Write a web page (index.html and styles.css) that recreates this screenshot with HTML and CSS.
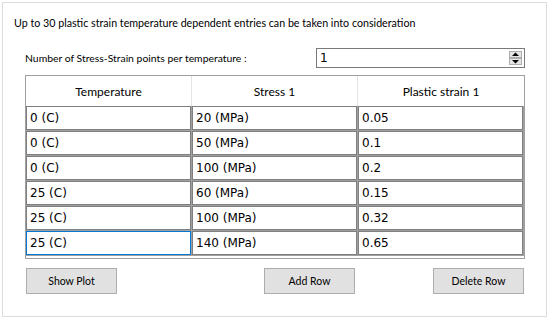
FILE: index.html
```html
<!DOCTYPE html>
<html lang="en">
<head>
  <meta charset="UTF-8">
  <title>Plastic strain</title>
  <link rel="stylesheet" href="styles.css">
</head>
<body>

<div class="frame">
  <p class="note">Up to 30 plastic strain temperature dependent entries can be taken into consideration</p>

  <div class="points">
    <span class="points-label">Number of Stress-Strain points per temperature :</span>
    <div class="spin">
      <span class="spin-value">1</span>
      <svg class="spin-btns" width="13" height="14" viewBox="0 0 13 14">
        <rect x="0.5" y="0.5" width="12" height="6" fill="#e5e5e5" stroke="#adadad"/>
        <rect x="0.5" y="7.5" width="12" height="6" fill="#e5e5e5" stroke="#adadad"/>
        <polygon points="3,5 10,5 6.5,1.5" fill="#000"/>
        <polygon points="3,9 10,9 6.5,12.5" fill="#000"/>
      </svg>
    </div>
  </div>

  <div class="grid">
    <div class="head">Temperature</div>
    <div class="head">Stress 1</div>
    <div class="head last">Plastic strain 1</div>

    <div class="cell"><div class="edit">0 (C)</div></div>
    <div class="cell"><div class="edit">20 (MPa)</div></div>
    <div class="cell"><div class="edit">0.05</div></div>

    <div class="cell"><div class="edit">0 (C)</div></div>
    <div class="cell"><div class="edit">50 (MPa)</div></div>
    <div class="cell"><div class="edit">0.1</div></div>

    <div class="cell"><div class="edit">0 (C)</div></div>
    <div class="cell"><div class="edit">100 (MPa)</div></div>
    <div class="cell"><div class="edit">0.2</div></div>

    <div class="cell"><div class="edit">25 (C)</div></div>
    <div class="cell"><div class="edit">60 (MPa)</div></div>
    <div class="cell"><div class="edit">0.15</div></div>

    <div class="cell"><div class="edit">25 (C)</div></div>
    <div class="cell"><div class="edit">100 (MPa)</div></div>
    <div class="cell"><div class="edit">0.32</div></div>

    <div class="cell"><div class="edit selected">25 (C)</div></div>
    <div class="cell"><div class="edit">140 (MPa)</div></div>
    <div class="cell"><div class="edit">0.65</div></div>
  </div>

  <div class="buttons">
    <button class="btn">Show Plot</button>
    <button class="btn add">Add Row</button>
    <button class="btn delete">Delete Row</button>
  </div>
</div>

</body>
</html>
```

FILE: styles.css
```css
body {
  margin: 0;
  background: #fff;
  font-family: Lato, "Noto Sans", sans-serif;
  font-size: 10.7px;
  color: #000;
}
.frame {
  margin: 2px 3px 0 2px;
  height: 313px;
  border: 1px solid #dcdcdc;
  padding: 0 21px 0 22px;
}
.note {
  margin: 12px 0 0 -11px;
  line-height: 16px;
}
.points {
  display: flex;
  justify-content: space-between;
  align-items: center;
  margin-top: 17px;
}
.points-label {
  font-size: 10.4px;
}
.spin {
  width: 207px;
  height: 18px;
  border: 1px solid #7a7a7a;
  display: flex;
  align-items: center;
  justify-content: space-between;
}
.spin-value {
  font-family: "DejaVu Sans", sans-serif;
  font-size: 12px;
  padding-left: 3px;
}
.spin-btns {
  margin-right: 2px;
}
.grid {
  margin-top: 7px;
  border: 1px solid #a0a0a0;
  padding-bottom: 2px;
  display: grid;
  grid-template-columns: 166px 166px 166px;
}
.head {
  height: 30px;
  display: flex;
  align-items: center;
  justify-content: center;
  border-right: 1px solid #e3e3e3;
  box-sizing: border-box;
  font-size: 12px;
}
.head.last {
  border-right: none;
}
.cell {
  height: 25px;
  border-right: 1px solid #a0a0a0;
  border-bottom: 1px solid #a0a0a0;
  box-sizing: border-box;
}
.edit {
  height: 100%;
  border: 1px solid #7f7f7f;
  box-sizing: border-box;
  display: flex;
  align-items: center;
  padding-left: 3px;
  font-family: "DejaVu Sans", sans-serif;
  font-size: 12px;
}
.edit.selected {
  border-color: #0078d7;
}
.buttons {
  display: flex;
  margin-top: 9px;
  padding-left: 1px;
}
.btn {
  width: 91px;
  height: 26px;
  background: #e1e1e1;
  border: 1px solid #adadad;
  font-family: Lato, "Noto Sans", sans-serif;
  font-size: 10.5px;
  color: #000;
  padding: 0;
}
.add {
  margin-left: 147px;
}
.delete {
  margin-left: auto;
  margin-right: 1px;
}
```
